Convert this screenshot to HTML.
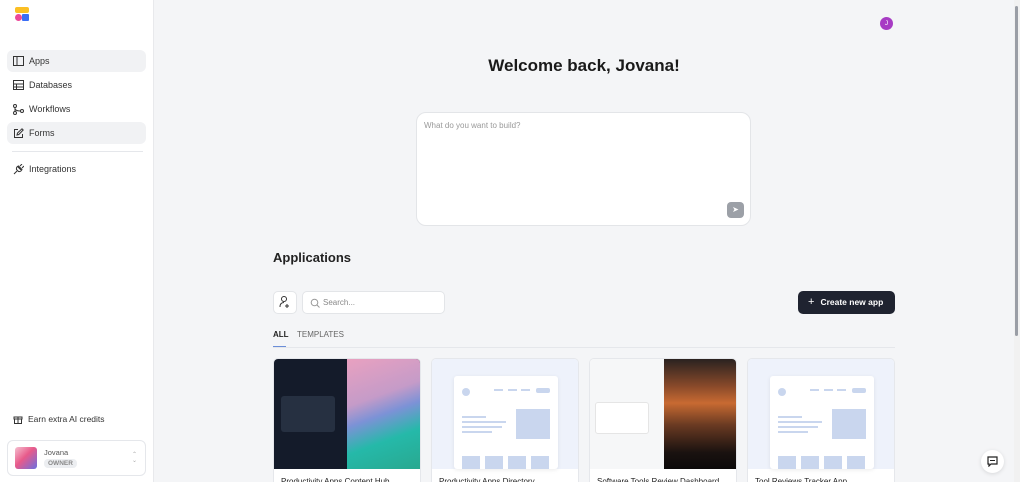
<!DOCTYPE html><html style="overflow:hidden;height:482px"><head><style>
*{box-sizing:border-box;margin:0;padding:0}
body{width:1020px;height:482px;overflow:hidden;font-family:"Liberation Sans",sans-serif;background:#f4f5f7;position:relative;color:#1f2937}
.sb{position:absolute;left:0;top:0;width:154px;height:482px;background:#fff;border-right:1px solid #e8e9ec}
.nav{position:absolute;left:7px;width:139px;height:22px;border-radius:6px;font-size:9px;display:flex;align-items:center;padding-left:6px;color:#333}
.nav svg{margin-right:5px}
.on{background:#f1f2f4}
.abs{position:absolute}
.card{position:absolute;top:358px;width:148px;height:124px;background:#fff;border:1px solid #e5e7eb;border-bottom:none;border-radius:5px 5px 0 0;overflow:hidden}
.card .im{height:110px;background:#eef2fb;position:relative}
.card .t{font-size:8px;padding:8px 7px;color:#222}
.mock{position:absolute;left:22px;top:17px;width:104px;height:93px;background:#fff;border-radius:3px;box-shadow:0 1px 4px rgba(0,0,0,.08)}
.b{position:absolute;background:#c9d6ee}
</style></head><body>
<div class="sb">
 <div class="abs" style="left:15px;top:7px;width:14px;height:6px;background:#fbbf24;border-radius:2px"></div>
 <div class="abs" style="left:15px;top:14px;width:7px;height:7px;background:#ec4899;border-radius:50%"></div>
 <div class="abs" style="left:22px;top:14px;width:7px;height:7px;background:#3b6ef5;border-radius:1px"></div>
 <div class="nav on" style="top:50px"><svg width="11" height="10"><rect x=".5" y=".5" width="10" height="9" fill="none" stroke="#333"/><line x1="4" y1="0" x2="4" y2="10" stroke="#333"/></svg>Apps</div>
 <div class="nav" style="top:74px"><svg width="11" height="10"><rect x=".5" y=".5" width="10" height="9" fill="none" stroke="#333"/><line x1="0" y1="4" x2="11" y2="4" stroke="#333"/><line x1="0" y1="7" x2="11" y2="7" stroke="#333"/><line x1="3.5" y1="4" x2="3.5" y2="10" stroke="#333"/></svg>Databases</div>
 <div class="nav" style="top:98px"><svg width="11" height="11"><circle cx="2" cy="2" r="1.5" fill="none" stroke="#333"/><circle cx="2" cy="9" r="1.5" fill="none" stroke="#333"/><circle cx="9" cy="7" r="1.5" fill="none" stroke="#333"/><path d="M2 3.5V7.5M2 5Q3 7 7.5 7" fill="none" stroke="#333"/></svg>Workflows</div>
 <div class="nav on" style="top:122px"><svg width="11" height="11"><path d="M5 1.5H1.5V9.5H9.5V6" fill="none" stroke="#333"/><path d="M4 7L4.5 5L9 0.8L10.2 2L5.8 6.5Z" fill="none" stroke="#333"/></svg>Forms</div>
 <div class="abs" style="left:12px;top:151px;width:131px;height:1px;background:#e5e7eb"></div>
 <div class="nav" style="top:158px"><svg width="11" height="11"><path d="M1 10L4 7M5 3L8 6M3.5 5.5L5.5 7.5Q8 8 9 5.5L5.5 2Q3 3 3.5 5.5ZM7 2L9 0M9 4L11 2" fill="none" stroke="#333"/></svg>Integrations</div>
 <div class="nav" style="top:408px;font-size:8.5px"><svg width="10" height="10"><rect x="1" y="3" width="8" height="2" fill="none" stroke="#333"/><rect x="1.5" y="5" width="7" height="4.5" fill="none" stroke="#333"/><line x1="5" y1="3" x2="5" y2="10" stroke="#333"/></svg>Earn extra AI credits</div>
 <div class="abs" style="left:7px;top:440px;width:139px;height:36px;border:1px solid #e5e7eb;border-radius:6px">
  <div class="abs" style="left:7px;top:6px;width:22px;height:22px;border-radius:3px;background:linear-gradient(135deg,#f5c0d0,#e85a8a 45%,#6a6fe0)"></div>
  <div class="abs" style="left:36px;top:7px;font-size:7.5px;color:#555">Jovana</div>
  <div class="abs" style="left:36px;top:18px;font-size:6.5px;color:#888;background:#eceef1;border-radius:4px;padding:1px 4px;font-weight:bold">OWNER</div>
  <div class="abs" style="left:124px;top:11px;font-size:6px;color:#aaa;line-height:6px">⌃<br>⌄</div>
 </div>
</div>
<div class="abs" style="left:880px;top:17px;width:13px;height:13px;border-radius:50%;background:#a73bc4;color:#fff;font-size:6.5px;text-align:center;line-height:13px">J</div>
<div class="abs" style="left:1014px;top:0;width:6px;height:482px;background:#f1f1f1"></div>
<div class="abs" style="left:1015px;top:6px;width:3px;height:330px;background:#9a9ea6;border-radius:2px"></div>
<div class="abs" style="left:0;top:56px;width:1168px;text-align:center;font-size:17px;font-weight:bold;color:#1a1a1a">Welcome back, Jovana!</div>
<div class="abs" style="left:416px;top:112px;width:335px;height:114px;background:#fff;border:1px solid #e3e5e8;border-radius:10px">
 <div class="abs" style="left:7px;top:8px;font-size:8px;color:#999">What do you want to build?</div>
 <div class="abs" style="left:310px;top:89px;width:17px;height:16px;background:#9ca0a7;border-radius:4px;color:#fff;font-size:8px;text-align:center;line-height:16px">➤</div>
</div>
<div class="abs" style="left:273px;top:250px;font-size:13px;font-weight:bold;color:#222">Applications</div>
<div class="abs" style="left:273px;top:291px;width:24px;height:23px;background:#fff;border:1px solid #e3e5e8;border-radius:5px"><svg width="22" height="21"><circle cx="10" cy="7" r="2.5" fill="none" stroke="#333"/><path d="M6 15Q6 10.5 10 10.5" fill="none" stroke="#333"/><path d="M13 12V16M11 14H15" stroke="#333"/></svg></div>
<div class="abs" style="left:302px;top:291px;width:143px;height:23px;background:#fff;border:1px solid #e3e5e8;border-radius:5px"><svg class="abs" style="left:7px;top:6px" width="10" height="10"><circle cx="4.5" cy="4.5" r="3.3" fill="none" stroke="#999"/><line x1="7" y1="7" x2="9.5" y2="9.5" stroke="#999"/></svg><span class="abs" style="left:20px;top:6px;font-size:8px;color:#888">Search...</span></div>
<div class="abs" style="left:798px;top:291px;width:97px;height:23px;background:#1f2330;border-radius:5px;color:#fff;font-size:8.5px;font-weight:bold;line-height:23px;padding-left:10px"><span style="font-weight:normal;font-size:11px;margin-right:6px">+</span>Create new app</div>
<div class="abs" style="left:273px;top:330px;font-size:8px;font-weight:bold;color:#222">ALL</div>
<div class="abs" style="left:297px;top:330px;font-size:8px;color:#666">TEMPLATES</div>
<div class="abs" style="left:273px;top:346px;width:13px;height:2px;background:#6b8ed8"></div>
<div class="abs" style="left:273px;top:347px;width:622px;height:1px;background:#e5e7eb"></div>
<div class="card" style="left:273px"><div class="im" style="background:#141b2a">
 <div class="abs" style="left:73px;top:0;width:75px;height:110px;background:linear-gradient(160deg,#e9a1c0 0%,#c59bc8 35%,#7c92d6 50%,#25b9a9 70%,#29a88f 100%)"></div>
 <div class="abs" style="left:7px;top:37px;width:54px;height:36px;background:#263041;border-radius:3px"></div></div><div class="t">Productivity Apps Content Hub</div></div>
<div class="card" style="left:431px"><div class="im"><div class="mock">
 <div class="b" style="left:8px;top:12px;width:8px;height:8px;border-radius:50%"></div><div class="b" style="left:40px;top:13px;width:9px;height:2px"></div><div class="b" style="left:54px;top:13px;width:9px;height:2px"></div><div class="b" style="left:67px;top:13px;width:9px;height:2px"></div><div class="b" style="left:82px;top:12px;width:14px;height:5px;border-radius:2px"></div>
 <div class="b" style="left:8px;top:40px;width:24px;height:2px"></div><div class="b" style="left:8px;top:45px;width:44px;height:2px"></div><div class="b" style="left:8px;top:50px;width:40px;height:2px"></div><div class="b" style="left:8px;top:55px;width:30px;height:2px"></div>
 <div class="b" style="left:62px;top:33px;width:34px;height:30px"></div>
 <div class="b" style="left:8px;top:80px;width:18px;height:13px"></div><div class="b" style="left:31px;top:80px;width:18px;height:13px"></div><div class="b" style="left:54px;top:80px;width:18px;height:13px"></div><div class="b" style="left:77px;top:80px;width:18px;height:13px"></div></div></div><div class="t">Productivity Apps Directory</div></div>
<div class="card" style="left:589px"><div class="im" style="background:#f6f7f8">
 <div class="abs" style="left:74px;top:0;width:74px;height:110px;background:linear-gradient(180deg,#2a2220 0%,#8a4a2a 25%,#c86a32 40%,#6a3a22 60%,#1a1210 85%,#0c0a0a 100%)"></div>
 <div class="abs" style="left:5px;top:43px;width:54px;height:32px;background:#fff;border:1px solid #e5e5e5;border-radius:3px"></div></div><div class="t">Software Tools Review Dashboard</div></div>
<div class="card" style="left:747px"><div class="im"><div class="mock">
 <div class="b" style="left:8px;top:12px;width:8px;height:8px;border-radius:50%"></div><div class="b" style="left:40px;top:13px;width:9px;height:2px"></div><div class="b" style="left:54px;top:13px;width:9px;height:2px"></div><div class="b" style="left:67px;top:13px;width:9px;height:2px"></div><div class="b" style="left:82px;top:12px;width:14px;height:5px;border-radius:2px"></div>
 <div class="b" style="left:8px;top:40px;width:24px;height:2px"></div><div class="b" style="left:8px;top:45px;width:44px;height:2px"></div><div class="b" style="left:8px;top:50px;width:40px;height:2px"></div><div class="b" style="left:8px;top:55px;width:30px;height:2px"></div>
 <div class="b" style="left:62px;top:33px;width:34px;height:30px"></div>
 <div class="b" style="left:8px;top:80px;width:18px;height:13px"></div><div class="b" style="left:31px;top:80px;width:18px;height:13px"></div><div class="b" style="left:54px;top:80px;width:18px;height:13px"></div><div class="b" style="left:77px;top:80px;width:18px;height:13px"></div></div></div><div class="t">Tool Reviews Tracker App</div></div>
<div class="abs" style="left:981px;top:450px;width:23px;height:23px;border-radius:50%;background:#fff;box-shadow:0 1px 4px rgba(0,0,0,.12)"><svg class="abs" style="left:6px;top:6px" width="11" height="11"><path d="M1 1H10V8H4L2 10V8H1Z" fill="none" stroke="#222" stroke-width="1.2"/><line x1="3" y1="4.5" x2="8" y2="4.5" stroke="#222"/></svg></div>
</body></html>
